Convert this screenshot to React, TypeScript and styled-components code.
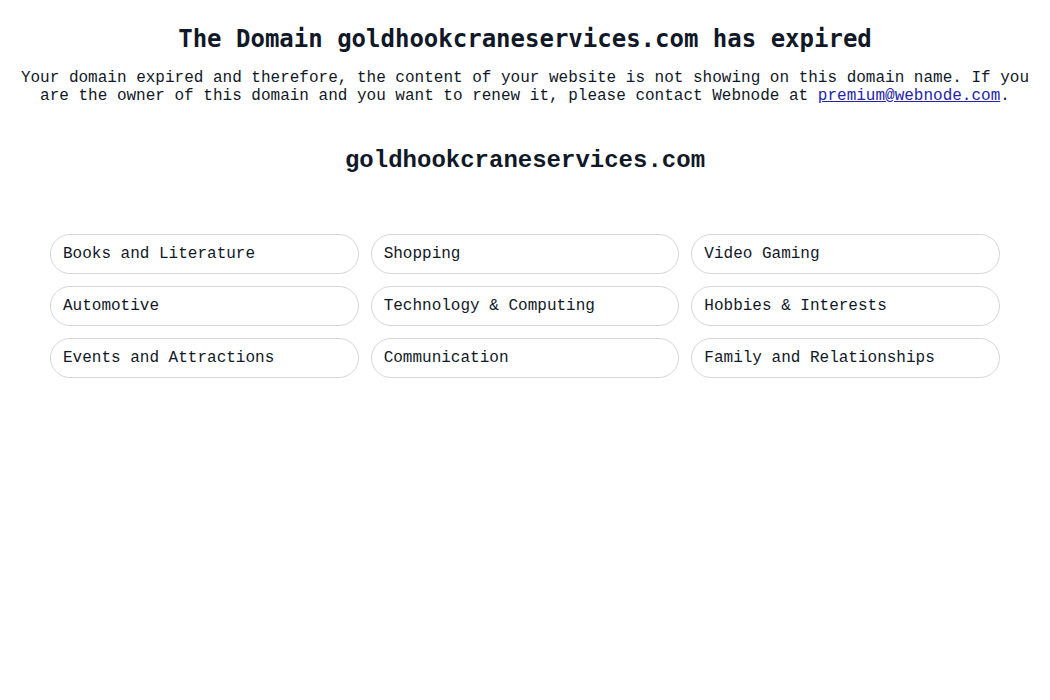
import React from "react";
import styled, { createGlobalStyle } from "styled-components";

const Global = createGlobalStyle`
  html, body { margin: 0; padding: 0; background: #ffffff; }
  body { font-family: "Liberation Mono", monospace; color: #111827; }
`;

const Page = styled.main`
  display: flex;
  flex-direction: column;
  align-items: center;
  padding: 25px 8px 0;
`;

const Title = styled.h1`
  margin: 0;
  font-family: "DejaVu Sans Mono", monospace;
  font-weight: bold;
  font-size: 24px;
  line-height: 28px;
  text-align: center;
  color: #111827;
`;

const Notice = styled.p`
  margin: 16px 0 0;
  font-family: "Liberation Mono", monospace;
  font-size: 16px;
  line-height: 18px;
  text-align: center;
  color: #111827;
`;

const Mail = styled.a`
  color: #2424a8;
  text-decoration: underline;
`;

const Domain = styled.h2`
  margin: 42px 0 0;
  font-family: "Liberation Mono", monospace;
  font-weight: bold;
  font-size: 24px;
  line-height: 28px;
  text-align: center;
  color: #111827;
`;

const Grid = styled.div`
  margin-top: 59px;
  width: 950px;
  display: grid;
  grid-template-columns: repeat(3, 1fr);
  gap: 12px 12px;
`;

const Pill = styled.a`
  display: flex;
  align-items: center;
  height: 40px;
  box-sizing: border-box;
  padding: 0 12px;
  border: 1px solid #d6d6d9;
  border-radius: 20px;
  font-family: "Liberation Mono", monospace;
  font-size: 16px;
  color: #111827;
  text-decoration: none;
  background: #ffffff;
`;

const topics = [
  "Books and Literature",
  "Shopping",
  "Video Gaming",
  "Automotive",
  "Technology & Computing",
  "Hobbies & Interests",
  "Events and Attractions",
  "Communication",
  "Family and Relationships",
];

export default function App() {
  return (
    <>
      <Global />
      <Page>
        <Title>The Domain goldhookcraneservices.com has expired</Title>
        <Notice>
          Your domain expired and therefore, the content of your website is not showing on this domain name. If you
          <br />
          are the owner of this domain and you want to renew it, please contact Webnode at{" "}
          <Mail href="mailto:premium@webnode.com">premium@webnode.com</Mail>.
        </Notice>
        <Domain>goldhookcraneservices.com</Domain>
        <Grid>
          {topics.map((t) => (
            <Pill key={t} href="#">
              {t}
            </Pill>
          ))}
        </Grid>
      </Page>
    </>
  );
}
